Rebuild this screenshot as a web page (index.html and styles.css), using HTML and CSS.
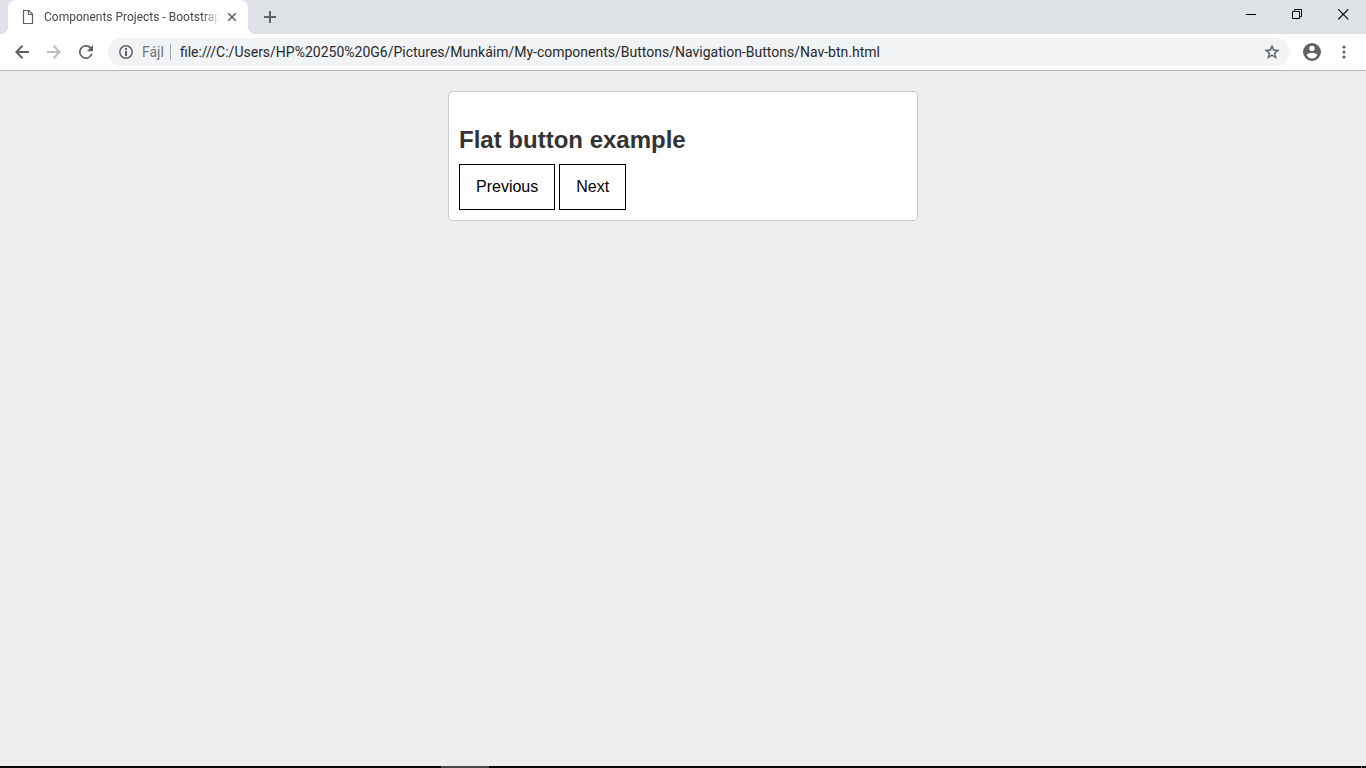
FILE: index.html
```html
<!DOCTYPE html>
<html lang="hu">
<head>
<meta charset="utf-8">
<title>Components Projects - Bootstrap</title>
<link rel="stylesheet" href="styles.css">
</head>
<body>
<header class="browser">
  <div class="tab-strip">
    <div class="tab">
      <svg class="tab-icon" width="12" height="16" viewBox="0 0 12 16" fill="none" stroke="#5a5d61" stroke-width="1.2"><path d="M1.5 1.5h5.500l3.500 3.500v9.500h-9zM6.500 1.500v4h4"/></svg>
      <span class="tab-title">Components Projects - Bootstrap</span>
      <button class="icon-button tab-close" aria-label="Close tab"><svg width="10" height="10" viewBox="0 0 10 10" stroke="#5f6368" stroke-width="1.6"><path d="M1.200 1.200l7.600 7.600M8.800 1.200l-7.600 7.600"/></svg></button>
    </div>
    <button class="icon-button new-tab" aria-label="New tab"><svg width="12" height="12" viewBox="0 0 12 12" fill="#5f6368"><path d="M5 0h2v5h5v2H7v5H5V7H0V5h5z"/></svg></button>
    <div class="window-controls">
      <button class="icon-button window-button" aria-label="Minimize"><svg width="11" height="11" viewBox="0 0 11 11"><path d="M0 5h10v1H0z"/></svg></button>
      <button class="icon-button window-button" aria-label="Restore"><svg width="11" height="11" viewBox="0 0 11 11" fill="none" stroke="#000"><path d="M.5 2.500h7v7h-7zM2.500 2.500v-2h7v7h-2"/></svg></button>
      <button class="icon-button window-button" aria-label="Close"><svg width="11" height="11" viewBox="0 0 11 11" stroke="#000" stroke-width="1.1"><path d="M.3.3l10 10M10.300.3l-10 10"/></svg></button>
    </div>
  </div>
  <div class="toolbar">
    <button class="icon-button nav-button" aria-label="Back"><svg width="14" height="14" viewBox="0 0 14 14" fill="none" stroke="#5f6368" stroke-width="2"><path d="M7.500.8L1.300 7l6.200 6.200M1.500 7H14"/></svg></button>
    <button class="icon-button nav-button" aria-label="Forward"><svg width="14" height="14" viewBox="0 0 14 14" fill="none" stroke="#babcbe" stroke-width="2"><path d="M6.500.8L12.700 7l-6.200 6.200M12.500 7H0"/></svg></button>
    <button class="icon-button nav-button" aria-label="Reload"><svg width="14" height="14" viewBox="4 4 16 16" fill="#5f6368"><path d="M17.650 6.350A8 8 0 1 0 19.730 14h-2.080A6 6 0 1 1 16.220 7.780L13 11h7V4z"/></svg></button>
    <div class="address">
      <svg width="16" height="16" viewBox="0 0 16 16" fill="#5f6368"><circle cx="8" cy="8" r="6.200" fill="none" stroke="#5f6368" stroke-width="1.500"/><path d="M7 7h2v5H7zM7 4h2v2H7z"/></svg>
      <label class="scheme" for="url">Fájl</label>
      <input class="url" id="url" type="text" spellcheck="false" value="file:///C:/Users/HP%20250%20G6/Pictures/Munkáim/My-components/Buttons/Navigation-Buttons/Nav-btn.html">
      <button class="icon-button" aria-label="Bookmark"><svg width="16" height="16" viewBox="1 1 22 22" fill="#5f6368" stroke="#5f6368" stroke-width=".5"><path d="M22 9.240l-7.190-.62L12 2 9.190 8.630 2 9.240l5.460 4.730L5.820 21 12 17.270 18.180 21l-1.630-7.030L22 9.240zM12 15.400l-3.760 2.270 1-4.280-3.320-2.880 4.380-.38L12 6.100l1.710 4.040 4.380.38-3.320 2.880 1 4.280L12 15.400z"/></svg></button>
    </div>
    <button class="icon-button profile" aria-label="Profile"><svg width="18" height="18" viewBox="2 2 20 20" fill="#5f6368"><path d="M12 2a10 10 0 1 0 0 20 10 10 0 0 0 0-20zm0 3a3 3 0 1 1 0 6 3 3 0 0 1 0-6zm0 14.200a7.200 7.200 0 0 1-6-3.220c.03-1.990 4-3.080 6-3.080s5.970 1.090 6 3.080a7.200 7.200 0 0 1-6 3.220z"/></svg></button>
    <button class="icon-button menu" aria-label="Menu"><svg width="4" height="14" viewBox="0 0 4 14" fill="#5f6368"><circle cx="2" cy="2" r="1.600"/><circle cx="2" cy="7" r="1.600"/><circle cx="2" cy="12" r="1.600"/></svg></button>
  </div>
</header>
<main class="page">
  <section class="card">
    <h3 class="card-title">Flat button example</h3>
    <div class="button-row">
      <button class="flat-button">Previous</button>
      <button class="flat-button">Next</button>
    </div>
  </section>
</main>
<footer class="taskbar"><span class="taskbar-active"></span><span class="taskbar-edge"></span></footer>
</body>
</html>
```
FILE: styles.css
```css
* {
  box-sizing: border-box;
}

body {
  display: flex;
  flex-direction: column;
  min-height: 100vh;
  margin: 0;
  background: #eee;
  font-family: "Liberation Sans", Arial, sans-serif;
}

.browser {
  border-bottom: 1px solid #b4b5b7;
  background: #fff;
  font-family: "Segoe UI", Roboto, sans-serif;
}

.icon-button {
  display: flex;
  flex: none;
  align-items: center;
  justify-content: center;
  padding: 0;
  border: 0;
  background: none;
}

.tab-strip {
  display: flex;
  height: 34px;
  background: #dee1e6;
}

.tab {
  position: relative;
  display: flex;
  align-items: center;
  width: 240px;
  margin-left: 8px;
  padding: 0 11px 0 14px;
  border-radius: 8px 8px 0 0;
  background: #fff;
}

.tab::before,
.tab::after {
  content: "";
  position: absolute;
  bottom: 0;
  width: 8px;
  height: 8px;
}

.tab::before {
  right: 100%;
  background: radial-gradient(circle at 0 0, #dee1e6 8px, #fff 8px);
}

.tab::after {
  left: 100%;
  background: radial-gradient(circle at 100% 0, #dee1e6 8px, #fff 8px);
}

.tab-icon {
  flex: none;
}

.tab-title {
  flex: 1;
  margin: 0 7px 0 10px;
  overflow: hidden;
  color: #45474a;
  font-size: 12px;
  line-height: 16px;
  white-space: nowrap;
  mask-image: linear-gradient(to right, #000 90%, transparent);
}

.tab-close {
  width: 10px;
}

.new-tab {
  width: 28px;
  margin-left: 8px;
}

.window-controls {
  display: flex;
  height: 29px;
  margin-left: auto;
}

.window-button {
  width: 46px;
}

.toolbar {
  display: flex;
  align-items: center;
  height: 36px;
  padding: 0 12px 0 6px;
}

.nav-button {
  width: 32px;
  height: 28px;
}

.address {
  display: flex;
  flex: 1;
  align-items: center;
  height: 28px;
  margin-left: 6px;
  padding: 0 10px;
  border-radius: 14px;
  background: #f1f3f4;
  font-size: 14px;
}

.scheme {
  margin-left: 8px;
  padding-right: 6px;
  border-right: 1px solid #a5a8ac;
  color: #70757a;
  line-height: 16px;
}

.url {
  flex: 1;
  min-width: 0;
  padding: 0 0 0 9px;
  border: 0;
  outline: 0;
  background: none;
  color: #27292c;
  font: inherit;
}

.profile {
  margin-left: 13px;
}

.menu {
  width: 20px;
  margin-left: 13px;
}

.page {
  flex: 1;
  padding: 20px;
}

.card {
  max-width: 470px;
  margin: 0 auto;
  padding: 10px;
  border: 1px solid #ccc;
  border-radius: 4px;
  background: #fff;
}

.card-title {
  margin: 24px 0 10px;
  color: #333;
  font-size: 24px;
  line-height: 28px;
}

.button-row {
  display: flex;
  gap: 4px;
}

.flat-button {
  padding: 12px 16px;
  border: 1px solid #000;
  background: #fff;
  color: #000;
  font: inherit;
  font-size: 16px;
  line-height: 20px;
}

.taskbar {
  display: flex;
  justify-content: space-between;
  height: 2px;
  padding: 0 4px 0 441px;
  background: #09080b;
}

.taskbar-active {
  width: 48px;
  background: #484749;
}

.taskbar-edge {
  width: 1px;
  background: #77777a;
}
```
